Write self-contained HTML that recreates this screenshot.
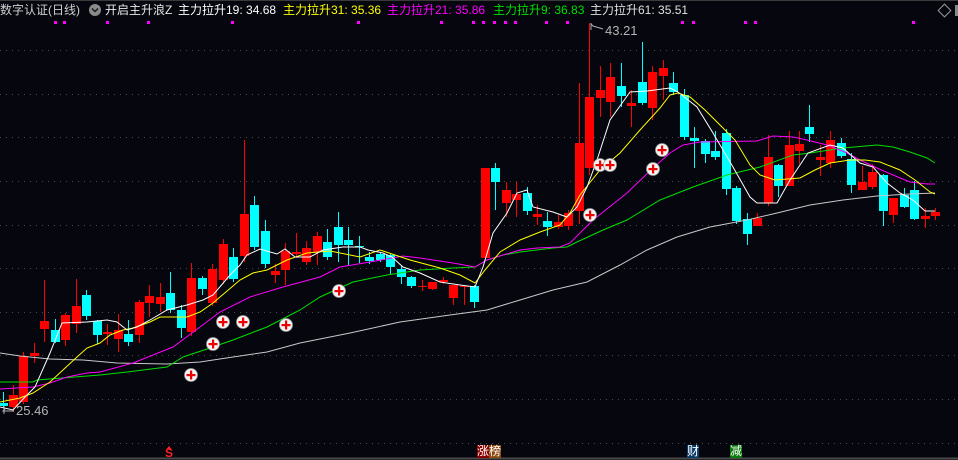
<!DOCTYPE html>
<html><head><meta charset="utf-8">
<style>
html,body{margin:0;padding:0;background:#05060e;}
#w{position:relative;width:958px;height:460px;overflow:hidden;background:#05060e;font-family:"Liberation Sans","Noto Sans CJK SC",sans-serif;}
.t{position:absolute;top:2px;font-size:12px;line-height:16px;white-space:nowrap;}
.b{position:absolute;top:445px;height:13px;font-size:12px;line-height:13px;color:#fff;width:12px;text-align:center;}
svg{position:absolute;left:0;top:0;}
</style></head><body><div id="w">
<svg id="s" width="958" height="460" viewBox="0 0 958 460">
<g stroke="#4a4a4a" stroke-width="1" stroke-dasharray="1,5">
<line x1="0" y1="50.5" x2="958" y2="50.5"/><line x1="0" y1="94.5" x2="958" y2="94.5"/>
<line x1="0" y1="137.5" x2="958" y2="137.5"/><line x1="0" y1="181.5" x2="958" y2="181.5"/>
<line x1="0" y1="225.5" x2="958" y2="225.5"/><line x1="0" y1="268.5" x2="958" y2="268.5"/>
<line x1="0" y1="312.5" x2="958" y2="312.5"/><line x1="0" y1="355.5" x2="958" y2="355.5"/>
<line x1="0" y1="399.5" x2="958" y2="399.5"/><line x1="0" y1="443.5" x2="958" y2="443.5"/>
</g>
<line x1="0" y1="0.5" x2="958" y2="0.5" stroke="#3a3a3a"/>
<line x1="0" y1="458.5" x2="958" y2="458.5" stroke="#4a4a4a" stroke-width="2"/>
<g id="c"></g>
<g fill="none" stroke-width="1">
<polyline stroke="#c8c8c8" points="0,353 20,356 50,359 83,360 117,363 167,364 200,362 233,357 267,352 300,343 320,339 350,333 400,322 450,315 487,310 520,300 553,290 587,282 620,265 647,250 677,237 710,227 747,220 777,213 810,205 843,200 877,196 910,194 935,193"/>
<polyline stroke="#00e000" points="0,382 33,382 37,380 100,375 127,372 167,367 183,357 207,349 233,340 267,327 300,310 320,297 353,282 387,275 420,270 453,268 475,267 487,260 503,255 520,252 553,248 567,247 577,242 603,230 627,220 660,200 693,187 727,175 760,167 793,155 810,153 843,148 877,145 893,147 910,152 927,158 935,163"/>
<polyline stroke="#ff00ff" points="0,389 33,387 50,383 67,377 87,373 100,372 133,363 173,347 200,327 220,312 250,297 283,287 320,277 340,267 370,262 403,256 420,258 453,263 475,267 487,260 503,255 520,250 537,248 560,247 570,243 593,220 627,193 653,168 670,153 683,145 700,142 757,141 773,136 793,137 807,140 827,145 847,153 860,160 877,168 893,175 910,182 927,184 935,184"/>
<polyline stroke="#ffff00" points="0,402 20,398 33,393 50,382 77,357 87,348 100,343 110,335 123,330 133,328 150,322 160,317 187,317 200,312 213,303 240,280 253,273 267,270 283,262 287,260 307,253 330,251 340,253 360,257 380,250 395,255 410,260 440,268 460,275 475,283 485,270 500,252 520,240 540,232 560,225 570,213 580,195 600,170 620,153 640,130 660,108 670,95 678,93 690,97 705,110 720,125 735,140 750,165 760,175 775,180 800,178 815,170 830,163 850,160 865,160 880,162 900,170 915,180 930,192 935,194"/>
<polyline stroke="#ffffff" points="0,407 13,410 25,397 35,387 50,353 62,323 87,322 107,320 117,322 127,330 137,327 150,320 167,310 187,305 203,300 213,295 230,275 240,265 247,255 260,249 277,254 285,249 295,257 310,257 323,250 343,247 360,247 368,250 383,253 392,257 403,267 420,273 440,282 460,285 475,287 483,267 493,233 507,213 517,193 527,190 533,207 553,212 567,217 577,207 587,187 597,160 610,120 630,92 647,91 670,88 678,92 697,107 713,133 733,167 750,197 757,203 777,203 790,180 808,153 830,145 843,148 853,157 860,163 873,167 887,183 900,193 913,200 925,211 935,211"/>
</g>
<g id="m"></g>
<g fill="#ff00ff">
<rect x="54" y="21" width="3" height="3"/><rect x="63" y="21" width="3" height="3"/><rect x="106" y="21" width="3" height="3"/><rect x="147" y="21" width="3" height="3"/><rect x="231" y="21" width="3" height="3"/><rect x="357" y="21" width="3" height="3"/><rect x="440" y="21" width="3" height="3"/><rect x="472" y="21" width="3" height="3"/><rect x="482" y="21" width="3" height="3"/><rect x="493" y="21" width="3" height="3"/><rect x="504" y="21" width="3" height="3"/><rect x="514" y="21" width="3" height="3"/><rect x="545" y="21" width="3" height="3"/><rect x="566" y="21" width="3" height="3"/><rect x="681" y="21" width="3" height="3"/><rect x="692" y="21" width="3" height="3"/><rect x="744" y="21" width="3" height="3"/><rect x="754" y="21" width="3" height="3"/><rect x="912" y="21" width="3" height="3"/>
</g>
<g stroke="#b0b0b0" fill="none" stroke-width="1">
<polyline points="591,24 593,26 603,29"/><line x1="591" y1="23" x2="591" y2="30"/>
<polyline points="5,409 3,411 14,411"/><line x1="4" y1="406" x2="4" y2="414"/>
</g>
<text x="605" y="35" fill="#b4b4b4" font-size="13" font-family="Liberation Sans,sans-serif">43.21</text>
<text x="16" y="415" fill="#b4b4b4" font-size="13" font-family="Liberation Sans,sans-serif">25.46</text>
<rect x="940" y="6" width="9" height="9" transform="rotate(45 944.5 10.5)" fill="none" stroke="#999"/>
<rect x="955" y="5" width="3" height="11" fill="#888"/>
<circle cx="95" cy="10" r="6" fill="#8a8a8a"/>
<polyline points="92,8.5 95,11.5 98,8.5" fill="none" stroke="#1a1a1a" stroke-width="1.5"/>
<path d="M169 446 L166.5 449 L171.5 449 Z" fill="#ff2020"/>
</svg>
<span class="t" style="left:0;color:#d0d0d0">数字认证(日线)</span>
<span class="t" style="left:105px;color:#e8e8e8">开启主升浪Z</span>
<span class="t" style="left:178px;color:#ffffff">主力拉升19: 34.68</span>
<span class="t" style="left:283px;color:#ffff00">主力拉升31: 35.36</span>
<span class="t" style="left:387px;color:#ff00ff">主力拉升21: 35.86</span>
<span class="t" style="left:493px;color:#00e000">主力拉升9: 36.83</span>
<span class="t" style="left:590px;color:#e0e0e0">主力拉升61: 35.51</span>
<span class="b" style="left:163px;top:447px;color:#ff2020;font-size:12px;font-weight:bold">S</span>
<span class="b" style="left:477px;background:#8b0000">涨</span>
<span class="b" style="left:489px;background:#8b4a10">榜</span>
<span class="b" style="left:687px;background:#0a3a6a">财</span>
<span class="b" style="left:730px;background:#0a7a0a">减</span>
</div>
<script>
var D=[[0,'c',403,406,392,408],[1,'r',395,407,385,412],[2,'r',356,402,352,404],[3,'r',353,356,343,363],[4,'r',321,329,280,342],[5,'c',330,342,319,343],[6,'r',315,340,313,346],[7,'r',306,324,279,333],[8,'c',295,316,290,320],[9,'c',321,335,320,344],[10,'r',332,334,324,345],[11,'r',330,339,314,352],[12,'c',334,342,320,346],[13,'r',302,335,300,343],[14,'r',296,303,285,317],[15,'r',297,304,283,312],[16,'c',293,310,272,313],[17,'c',310,328,305,338],[18,'r',278,332,263,336],[19,'c',278,289,276,295],[20,'r',269,303,264,306],[21,'r',244,280,239,284],[22,'c',257,279,248,282],[23,'r',214,256,140,262],[24,'c',205,247,196,250],[25,'c',231,264,220,268],[26,'r',271,275,264,283],[27,'r',251,270,243,285],[28,'r',252,254,233,258],[29,'r',248,262,241,265],[30,'r',236,252,232,265],[31,'c',242,257,229,260],[32,'c',227,245,212,262],[33,'c',240,245,227,265],[34,'c',246,247,236,263],[35,'c',257,261,252,264],[36,'c',254,260,252,262],[37,'c',255,267,254,275],[38,'c',269,277,266,284],[39,'c',277,286,276,288],[40,'r',286,287,280,291],[41,'r',282,289,282,290],[42,'r',280,282,277,284],[43,'r',285,298,285,305],[44,'r',286,287,285,305],[45,'c',286,302,285,308],[46,'r',168,258,168,258],[47,'c',168,182,163,210],[48,'r',190,203,182,217],[49,'r',194,200,182,217],[50,'c',193,211,187,215],[51,'r',214,217,205,225],[52,'c',221,227,212,236],[53,'r',222,227,215,229],[54,'r',213,226,210,230],[55,'r',143,211,83,224],[56,'r',97,168,23,175],[57,'r',90,98,66,117],[58,'r',77,102,63,117],[59,'c',86,96,63,107],[60,'r',103,106,90,127],[61,'c',82,103,42,105],[62,'r',72,108,66,120],[63,'r',68,76,60,100],[64,'c',83,92,72,95],[65,'c',95,137,89,140],[66,'c',138,141,127,168],[67,'c',141,154,139,163],[68,'c',151,157,131,160],[69,'c',133,189,129,195],[70,'c',188,221,186,224],[71,'c',219,234,213,245],[72,'r',218,226,213,226],[73,'r',157,203,135,206],[74,'c',165,186,164,197],[75,'r',145,186,131,186],[76,'r',144,151,131,164],[77,'c',127,134,105,142],[78,'r',157,160,145,176],[79,'r',140,163,131,168],[80,'c',143,156,138,158],[81,'c',159,185,153,193],[82,'r',182,190,166,190],[83,'r',172,187,164,189],[84,'c',175,211,174,226],[85,'r',198,215,198,223],[86,'c',195,207,188,208],[87,'c',190,219,181,220],[88,'r',216,219,208,228],[89,'r',212,216,208,220]];
var g=document.getElementById('c'),h='';
D.forEach(function(d){var x=2.52+10.48*d[0],col=d[1]=='r'?'#ff0000':'#00ffff';var cx=Math.round(x)+0.5;
h+='<line x1="'+cx+'" y1="'+d[4]+'" x2="'+cx+'" y2="'+d[5]+'" stroke="'+col+'"/>';
h+='<rect x="'+(Math.round(x)-4)+'" y="'+d[2]+'" width="9" height="'+Math.max(1,d[3]-d[2])+'" fill="'+col+'"/>';});
g.innerHTML=h;
var M=[[191,375],[213,344],[223,322],[243,322],[286,325],[339,291],[590,215],[600,165],[610,165],[653,169],[662,150]],k='';
M.forEach(function(p){k+='<circle cx="'+p[0]+'" cy="'+p[1]+'" r="6.5" fill="#f4f4f4" stroke="#999" stroke-width="0.8"/><rect x="'+(p[0]-4.5)+'" y="'+(p[1]-1)+'" width="9" height="2.2" fill="#e00"/><rect x="'+(p[0]-1)+'" y="'+(p[1]-4.5)+'" width="2.2" height="9" fill="#e00"/>';});
document.getElementById('m').innerHTML=k;
</script>
</body></html>
